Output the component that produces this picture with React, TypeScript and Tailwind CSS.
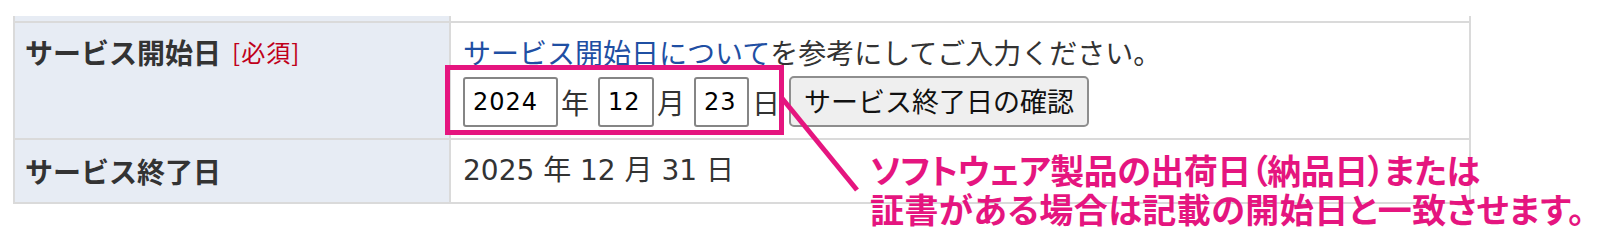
import React from "react";

const cjk = "font-['Noto_Sans_CJK_JP',sans-serif]";
const mixed = "font-['DejaVu_Sans','Noto_Sans_CJK_JP',sans-serif]";

function DateInput({ value, width }: { value: string; width: string }) {
  return (
    <div
      className={`${width} h-[50px] flex items-center pl-[8px] border-2 border-[#858585] rounded-[3px] bg-white text-[24px] tracking-[1px] text-black ${mixed}`}
    >
      {value}
    </div>
  );
}

export default function App() {
  return (
    <div className={`relative w-[1597px] h-[241px] bg-white overflow-hidden ${cjk}`}>
      <div className="ml-[13px] mt-[16px] w-[1458px] border-x-2 border-b-2 border-[#dadada]">
        {/* tail of previous row */}
        <div className="flex h-[5px]">
          <div className="w-[436px] bg-[#e7ecf4] border-r-2 border-[#dadada]" />
          <div className="flex-1" />
        </div>
        {/* row 1 */}
        <div className="flex h-[117px] border-t-2 border-[#dadada]">
          <div className="w-[436px] bg-[#e7ecf4] border-r-2 border-[#dadada] pl-[10px] pt-[8px]">
            <div className="flex items-center h-[42px]">
              <span className="text-[28px] font-bold text-[#333333]">サービス開始日</span>
              <span className="ml-[11px] text-[24px] tracking-[1px] text-[#c0001a]">[必須]</span>
            </div>
          </div>
          <div className="flex-1 pl-[12px] pt-[8px]">
            <div className="h-[42px] flex items-center text-[28px] text-[#333333]">
              <span className="text-[#1f4fa3]">サービス開始日について</span>
              <span>を参考にしてご入力ください。</span>
            </div>
            <div className="flex items-center mt-[3px] text-[28px] text-[#333333]">
              <DateInput value="2024" width="w-[95px]" />
              <span className="ml-[3px] w-[28px]">年</span>
              <div className="ml-[9px]">
                <DateInput value="12" width="w-[56px]" />
              </div>
              <span className="ml-[3px] w-[28px]">月</span>
              <div className="ml-[9px]">
                <DateInput value="23" width="w-[55px]" />
              </div>
              <span className="ml-[3px] w-[28px]">日</span>
              <button className="ml-[9px] w-[300px] h-[51px] bg-[#efefef] border-2 border-[#8e8e8e] rounded-[5px] text-[27px] text-[#111111] flex items-center justify-center">
                サービス終了日の確認
              </button>
            </div>
          </div>
        </div>
        {/* row 2 */}
        <div className="flex h-[64px] border-t-2 border-[#dadada]">
          <div className="w-[436px] bg-[#e7ecf4] border-r-2 border-[#dadada] pl-[10px] flex items-center">
            <span className="text-[28px] font-bold text-[#333333]">サービス終了日</span>
          </div>
          <div className={`flex-1 pl-[12px] flex items-center text-[28px] text-[#333333] ${mixed}`}>
            2025 年 12 月 31 日
          </div>
        </div>
      </div>

      {/* annotation overlay */}
      <div className="absolute left-[445px] top-[65px] w-[339px] h-[70px] border-[5px] border-[#e5157f]" />
      <svg className="absolute left-0 top-0" width="1597" height="241" viewBox="0 0 1597 241">
        <line x1="781" y1="97" x2="857" y2="190" stroke="#e5157f" strokeWidth="5" />
      </svg>
      <div className="absolute left-[870px] top-[150px] text-[34px] leading-[39px] font-bold text-[#e5157f] whitespace-nowrap">
        <div className="[font-feature-settings:'palt'] tracking-[-0.5px]">ソフトウェア製品の出荷日（納品日）または</div>
        <div className="[font-feature-settings:'palt'] tracking-[0.5px]">証書がある場合は記載の開始日と一致させます。</div>
      </div>
    </div>
  );
}
